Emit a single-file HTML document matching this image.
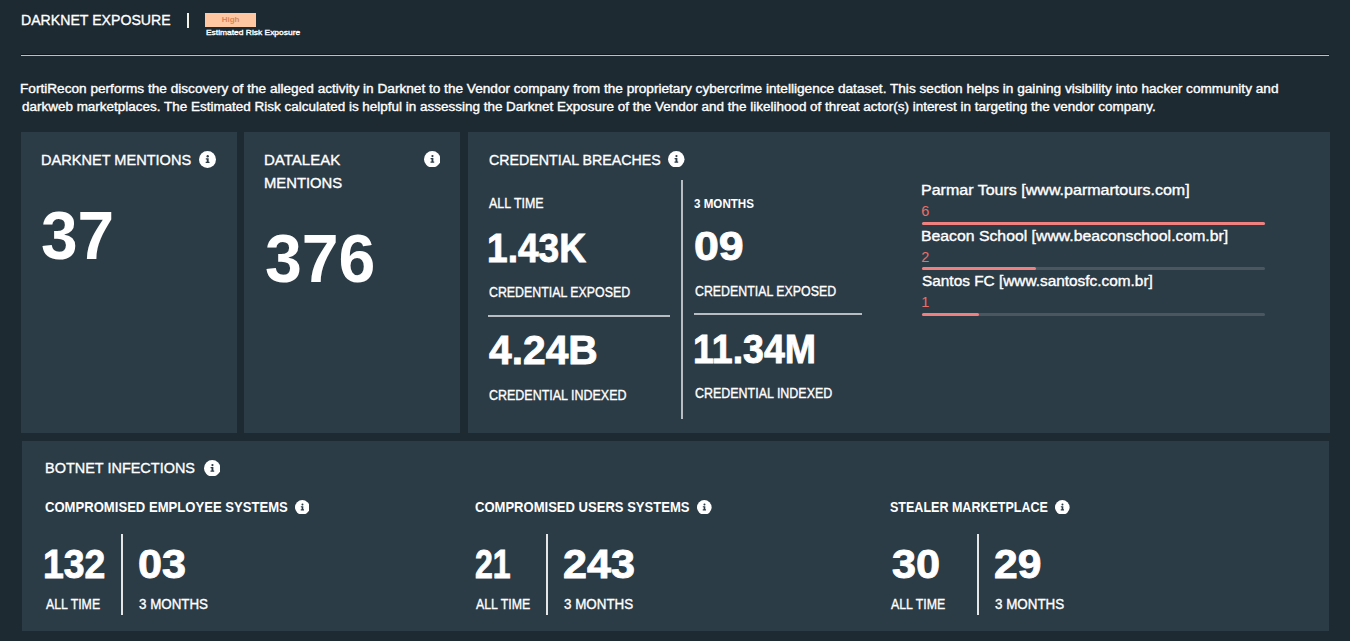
<!DOCTYPE html>
<html><head><meta charset="utf-8"><title>Darknet Exposure</title>
<style>
html,body{margin:0;padding:0}
body{width:1350px;height:641px;background:#1e2a32;position:relative;overflow:hidden;font-family:"Liberation Sans",sans-serif}
.r{position:absolute}
.ic{position:absolute;display:block}
.t{position:absolute;line-height:1;white-space:nowrap;transform-origin:0 0;color:#fff}
.n{-webkit-text-stroke:0.35px currentColor}
.b{-webkit-text-stroke:0.9px currentColor}
</style></head><body>
<div class="r" style="left:21px;top:132px;width:216px;height:301px;background:#2c3c47;"></div>
<div class="r" style="left:244px;top:132px;width:216px;height:301px;background:#2c3c47;"></div>
<div class="r" style="left:468px;top:132px;width:862px;height:301px;background:#2c3c47;"></div>
<div class="r" style="left:22px;top:441px;width:1307px;height:190px;background:#2c3c47;"></div>
<div class="r" style="left:187px;top:13px;width:2px;height:15px;background:#f2f2e8;"></div>
<div class="r" style="left:205px;top:13px;width:51px;height:14px;background:#ffc8a2;"></div>
<div class="r" style="left:21px;top:54px;width:1308px;height:1px;background:#0d171d;"></div>
<div class="r" style="left:21px;top:55px;width:1308px;height:1px;background:#bfbfbf;"></div>
<div class="r" style="left:681px;top:180px;width:2px;height:239px;background:#b7bdc2;"></div>
<div class="r" style="left:488px;top:315px;width:182px;height:2px;background:#b7bdc2;"></div>
<div class="r" style="left:694px;top:313px;width:168px;height:2px;background:#b7bdc2;"></div>
<div class="r" style="left:922px;top:222px;width:343px;height:3px;background:#4a5761;border-radius:2px"></div>
<div class="r" style="left:922px;top:222px;width:343px;height:3px;background:#f08080;border-radius:2px"></div>
<div class="r" style="left:922px;top:267px;width:343px;height:3px;background:#4a5761;border-radius:2px"></div>
<div class="r" style="left:922px;top:267px;width:114px;height:3px;background:#f08080;border-radius:2px"></div>
<div class="r" style="left:922px;top:313px;width:343px;height:3px;background:#4a5761;border-radius:2px"></div>
<div class="r" style="left:922px;top:313px;width:57px;height:3px;background:#f08080;border-radius:2px"></div>
<div class="r" style="left:121px;top:534px;width:2px;height:81px;background:#e4e6e8;"></div>
<div class="r" style="left:546px;top:534px;width:2px;height:81px;background:#e4e6e8;"></div>
<div class="r" style="left:977px;top:534px;width:2px;height:81px;background:#e4e6e8;"></div>
<svg class="ic" style="left:199.30px;top:150.70px;width:17px;height:17px" viewBox="0 0 16 16"><circle cx="8" cy="8" r="8" fill="#fff"/><circle cx="8.2" cy="4.9" r="1.1" fill="#2c3c47"/><path d="M6.4 6.8H9.1V10.2H9.9V11.4H6.3V10.2H7.3V8.0H6.4Z" fill="#2c3c47"/></svg>
<svg class="ic" style="left:423.75px;top:150.85px;width:16.5px;height:16.5px" viewBox="0 0 16 16"><circle cx="8" cy="8" r="8" fill="#fff"/><circle cx="8.2" cy="4.9" r="1.1" fill="#2c3c47"/><path d="M6.4 6.8H9.1V10.2H9.9V11.4H6.3V10.2H7.3V8.0H6.4Z" fill="#2c3c47"/></svg>
<svg class="ic" style="left:668.15px;top:150.85px;width:16.5px;height:16.5px" viewBox="0 0 16 16"><circle cx="8" cy="8" r="8" fill="#fff"/><circle cx="8.2" cy="4.9" r="1.1" fill="#2c3c47"/><path d="M6.4 6.8H9.1V10.2H9.9V11.4H6.3V10.2H7.3V8.0H6.4Z" fill="#2c3c47"/></svg>
<svg class="ic" style="left:203.75px;top:459.55px;width:16.5px;height:16.5px" viewBox="0 0 16 16"><circle cx="8" cy="8" r="8" fill="#fff"/><circle cx="8.2" cy="4.9" r="1.1" fill="#2c3c47"/><path d="M6.4 6.8H9.1V10.2H9.9V11.4H6.3V10.2H7.3V8.0H6.4Z" fill="#2c3c47"/></svg>
<svg class="ic" style="left:294.80px;top:499.60px;width:14.6px;height:14.6px" viewBox="0 0 16 16"><circle cx="8" cy="8" r="8" fill="#fff"/><circle cx="8.2" cy="4.9" r="1.1" fill="#2c3c47"/><path d="M6.4 6.8H9.1V10.2H9.9V11.4H6.3V10.2H7.3V8.0H6.4Z" fill="#2c3c47"/></svg>
<svg class="ic" style="left:697.20px;top:499.70px;width:14.6px;height:14.6px" viewBox="0 0 16 16"><circle cx="8" cy="8" r="8" fill="#fff"/><circle cx="8.2" cy="4.9" r="1.1" fill="#2c3c47"/><path d="M6.4 6.8H9.1V10.2H9.9V11.4H6.3V10.2H7.3V8.0H6.4Z" fill="#2c3c47"/></svg>
<svg class="ic" style="left:1055.30px;top:499.70px;width:14.6px;height:14.6px" viewBox="0 0 16 16"><circle cx="8" cy="8" r="8" fill="#fff"/><circle cx="8.2" cy="4.9" r="1.1" fill="#2c3c47"/><path d="M6.4 6.8H9.1V10.2H9.9V11.4H6.3V10.2H7.3V8.0H6.4Z" fill="#2c3c47"/></svg>
<div class="t n" style="left:20.59px;top:12.44px;font-size:15.5px;font-weight:normal;color:#ffffff;transform:scaleX(0.911)">DARKNET EXPOSURE</div>
<div class="t" style="left:221.7px;top:15.8px;font-size:8px;font-weight:bold;color:#d6865c">High</div>
<div class="t n" style="left:205.7px;top:28.8px;font-size:8px;font-weight:normal;color:#ffffff;transform:scaleX(1.0533)">Estimated Risk Exposure</div>
<div class="t n" style="left:20.36px;top:82.8px;font-size:12px;font-weight:normal;color:#ffffff;transform:scaleX(1.1355)">FortiRecon performs the discovery of the alleged activity in Darknet to the Vendor company from the proprietary cybercrime intelligence dataset. This section helps in gaining visibility into hacker community and</div>
<div class="t n" style="left:21.5px;top:100.6px;font-size:12px;font-weight:normal;color:#ffffff;transform:scaleX(1.1224)">darkweb marketplaces. The Estimated Risk calculated is helpful in assessing the Darknet Exposure of the Vendor and the likelihood of threat actor(s) interest in targeting the vendor company.</div>
<div class="t n" style="left:40.81px;top:151.82px;font-size:15.5px;font-weight:normal;color:#ffffff;transform:scaleX(0.9387)">DARKNET MENTIONS</div>
<div class="t" style="left:41.06px;top:201.12px;font-size:68px;font-weight:bold;color:#ffffff;transform:scaleX(0.9676)">37</div>
<div class="t n" style="left:264.03px;top:151.55px;font-size:15.5px;font-weight:normal;color:#ffffff;transform:scaleX(0.9692)">DATALEAK</div>
<div class="t n" style="left:264.04px;top:175.45px;font-size:15.5px;font-weight:normal;color:#ffffff;transform:scaleX(0.9556)">MENTIONS</div>
<div class="t" style="left:264.55px;top:224.24px;font-size:68px;font-weight:bold;color:#ffffff;transform:scaleX(0.9734)">376</div>
<div class="t n" style="left:488.5px;top:152.19px;font-size:15.5px;font-weight:normal;color:#ffffff;transform:scaleX(0.9171)">CREDENTIAL BREACHES</div>
<div class="t n" style="left:488.5px;top:196.27px;font-size:14px;font-weight:normal;color:#ffffff;transform:scaleX(0.8885)">ALL TIME</div>
<div class="t b" style="left:486.79px;top:227.83px;font-size:41px;font-weight:bold;color:#ffffff;transform:scaleX(0.9056)">1.43K</div>
<div class="t n" style="left:488.6px;top:285.26px;font-size:14px;font-weight:normal;color:#ffffff;transform:scaleX(0.8837)">CREDENTIAL EXPOSED</div>
<div class="t b" style="left:488.9px;top:330.14px;font-size:41px;font-weight:bold;color:#ffffff;transform:scaleX(0.9944)">4.24B</div>
<div class="t n" style="left:488.6px;top:387.73px;font-size:14px;font-weight:normal;color:#ffffff;transform:scaleX(0.8909)">CREDENTIAL INDEXED</div>
<div class="t" style="left:693.83px;top:197.62px;font-size:12px;font-weight:bold;color:#ffffff;transform:scaleX(0.9672)">3 MONTHS</div>
<div class="t b" style="left:694.21px;top:225.84px;font-size:41px;font-weight:bold;color:#ffffff;transform:scaleX(1.0909)">09</div>
<div class="t n" style="left:694.8px;top:283.56px;font-size:14px;font-weight:normal;color:#ffffff;transform:scaleX(0.8831)">CREDENTIAL EXPOSED</div>
<div class="t b" style="left:693.17px;top:328.68px;font-size:41px;font-weight:bold;color:#ffffff;transform:scaleX(0.9146)">11.34M</div>
<div class="t n" style="left:695.0px;top:385.57px;font-size:14px;font-weight:normal;color:#ffffff;transform:scaleX(0.8896)">CREDENTIAL INDEXED</div>
<div class="t n" style="left:920.86px;top:182.9px;font-size:14px;font-weight:normal;color:#ffffff;transform:scaleX(1.1446)">Parmar Tours [www.parmartours.com]</div>
<div class="t" style="left:921.3px;top:204.24px;font-size:14.5px;font-weight:normal;color:#ea6f68">6</div>
<div class="t n" style="left:920.87px;top:228.6px;font-size:14px;font-weight:normal;color:#ffffff;transform:scaleX(1.1277)">Beacon School [www.beaconschool.com.br]</div>
<div class="t" style="left:921.3px;top:249.56px;font-size:14.5px;font-weight:normal;color:#ea6f68">2</div>
<div class="t n" style="left:922.0px;top:273.5px;font-size:14px;font-weight:normal;color:#ffffff;transform:scaleX(1.0986)">Santos FC [www.santosfc.com.br]</div>
<div class="t" style="left:921.3px;top:294.78px;font-size:14.5px;font-weight:normal;color:#ea6f68">1</div>
<div class="t n" style="left:44.77px;top:460.48px;font-size:15.5px;font-weight:normal;color:#ffffff;transform:scaleX(0.9331)">BOTNET INFECTIONS</div>
<div class="t" style="left:44.77px;top:499.93px;font-size:14px;font-weight:bold;color:#ffffff;transform:scaleX(0.9345)">COMPROMISED EMPLOYEE SYSTEMS</div>
<div class="t b" style="left:43.28px;top:543.68px;font-size:41px;font-weight:bold;color:#ffffff;transform:scaleX(0.9123)">132</div>
<div class="t b" style="left:138.15px;top:543.68px;font-size:41px;font-weight:bold;color:#ffffff;transform:scaleX(1.0523)">03</div>
<div class="t n" style="left:45.6px;top:596.9px;font-size:14px;font-weight:normal;color:#ffffff;transform:scaleX(0.8803)">ALL TIME</div>
<div class="t n" style="left:138.7px;top:596.9px;font-size:14px;font-weight:normal;color:#ffffff;transform:scaleX(0.9542)">3 MONTHS</div>
<div class="t" style="left:474.97px;top:500.0px;font-size:14px;font-weight:bold;color:#ffffff;transform:scaleX(0.9314)">COMPROMISED USERS SYSTEMS</div>
<div class="t b" style="left:475.12px;top:543.89px;font-size:41px;font-weight:bold;color:#ffffff;transform:scaleX(0.7818)">21</div>
<div class="t b" style="left:562.95px;top:543.68px;font-size:41px;font-weight:bold;color:#ffffff;transform:scaleX(1.0522)">243</div>
<div class="t n" style="left:476.0px;top:596.9px;font-size:14px;font-weight:normal;color:#ffffff;transform:scaleX(0.882)">ALL TIME</div>
<div class="t n" style="left:563.5px;top:596.9px;font-size:14px;font-weight:normal;color:#ffffff;transform:scaleX(0.9569)">3 MONTHS</div>
<div class="t" style="left:890.01px;top:500.0px;font-size:14px;font-weight:bold;color:#ffffff;transform:scaleX(0.8943)">STEALER MARKETPLACE</div>
<div class="t b" style="left:891.6px;top:543.68px;font-size:41px;font-weight:bold;color:#ffffff;transform:scaleX(1.0533)">30</div>
<div class="t b" style="left:993.66px;top:543.68px;font-size:41px;font-weight:bold;color:#ffffff;transform:scaleX(1.0386)">29</div>
<div class="t n" style="left:891.0px;top:596.9px;font-size:14px;font-weight:normal;color:#ffffff;transform:scaleX(0.882)">ALL TIME</div>
<div class="t n" style="left:994.7px;top:596.9px;font-size:14px;font-weight:normal;color:#ffffff;transform:scaleX(0.9569)">3 MONTHS</div>
</body></html>
